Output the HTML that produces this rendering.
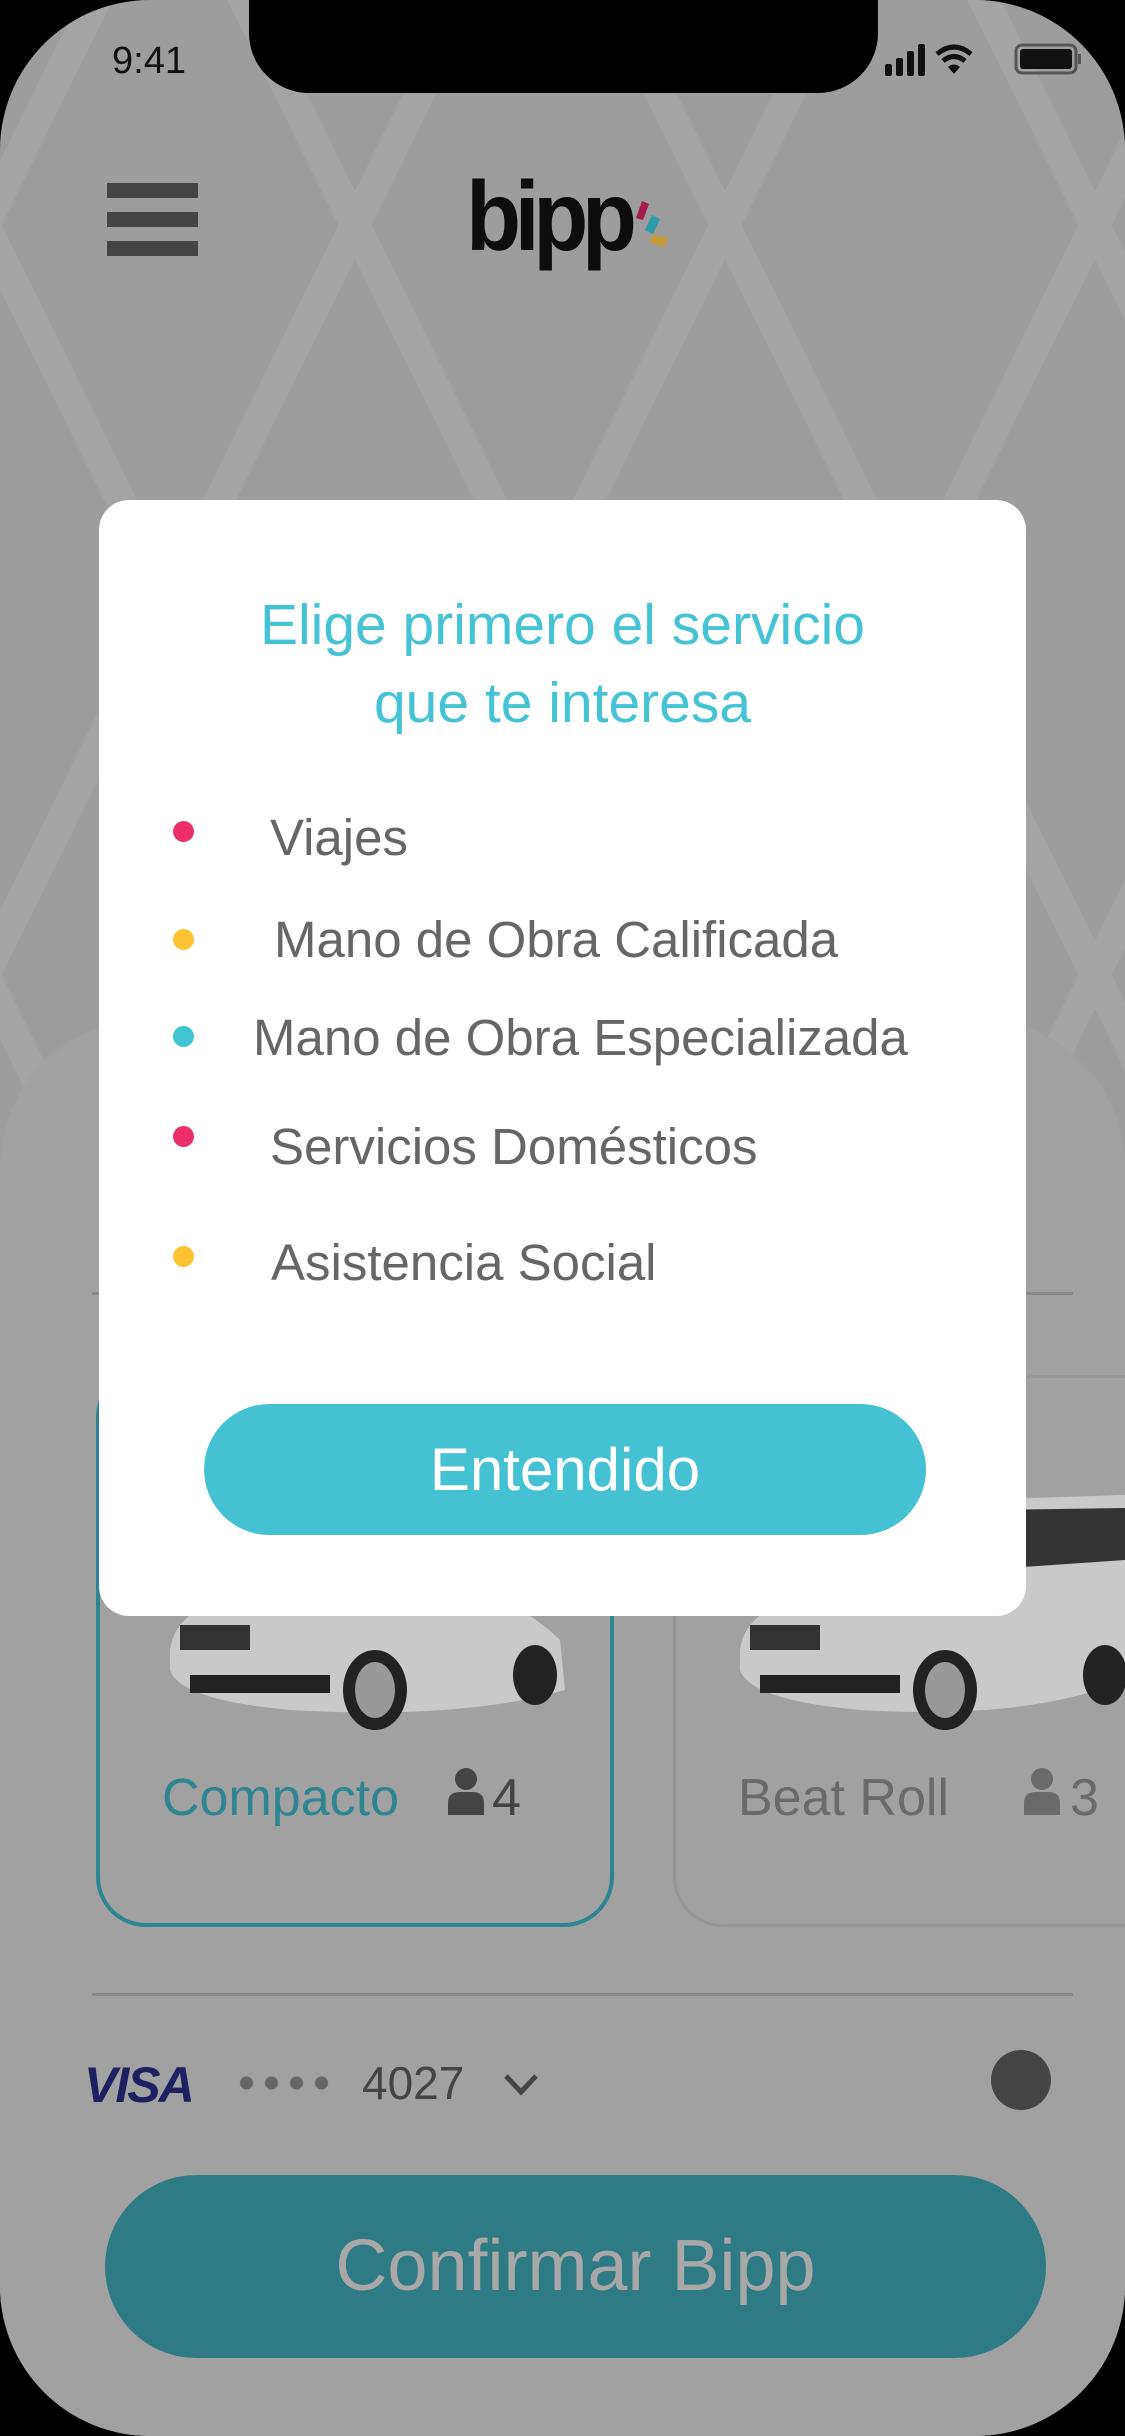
<!DOCTYPE html>
<html><head><meta charset="utf-8"><style>
*{margin:0;padding:0;box-sizing:border-box}
html,body{width:1125px;height:2436px;background:#000;overflow:hidden;font-family:"Liberation Sans",sans-serif}
.screen{position:absolute;left:0;top:0;width:1125px;height:2436px;background:#9d9d9d;border-radius:150px;overflow:hidden}
.pat{position:absolute;left:0;top:0}
.notch{position:absolute;left:249px;top:-10px;width:629px;height:103px;background:#000;border-radius:0 0 60px 60px}
.abs{position:absolute}
.sheet{position:absolute;left:0;top:1018px;width:1125px;height:1500px;background:#a1a1a1;border-radius:150px 150px 0 0}
.bar{position:absolute;left:107px;width:91px;height:15px;background:#444}
.modal{position:absolute;left:99px;top:500px;width:927px;height:1116px;background:#fff;border-radius:30px}
.t{position:absolute;left:0;width:100%;text-align:center;color:#45c3d5;font-size:57px}
.li{position:absolute;color:#666;font-size:51px;white-space:nowrap}
.dot{position:absolute;width:21px;height:21px;border-radius:50%}
</style></head><body>
<div class="screen">
<svg class="pat" width="1125" height="2436" viewBox="0 0 1125 2436">
<g stroke="#a4a4a4" stroke-width="30" fill="none">
<path d="M-200 -150 L170 600 L-200 1350"/>
<path d="M170 -150 L-200 600"/>
<path d="M170 -150 L540 600 L170 1350 L540 2100"/>
<path d="M540 -150 L170 600"/>
<path d="M540 -150 L910 600 L540 1350"/>
<path d="M910 -150 L540 600"/>
<path d="M910 -150 L1280 600 L910 1350"/>
<path d="M1280 -150 L910 600"/>
<path d="M-200 1350 L170 2100"/>
<path d="M910 1350 L540 600"/>
<path d="M170 1350 L-200 600"/>
<path d="M1280 1350 L910 600"/>
</g></svg>
<div class="notch"></div>
<div class="abs" style="left:112px;top:40px;font-size:38px;color:#111">9:41</div>
<svg class="abs" style="left:885px;top:42px" width="200" height="36" viewBox="0 0 200 36">
<rect x="0" y="22" width="7" height="12" rx="2" fill="#111"/><rect x="11" y="16" width="7" height="18" rx="2" fill="#111"/><rect x="22" y="9" width="7" height="25" rx="2" fill="#111"/><rect x="33" y="2" width="7" height="32" rx="2" fill="#111"/>
<path d="M52 12 Q69 -2 86 12" stroke="#111" stroke-width="5" fill="none"/><path d="M58 19 Q69 10 80 19" stroke="#111" stroke-width="5" fill="none"/><path d="M63 25 L69 32 L75 25 Q69 20 63 25Z" fill="#111"/>
<rect x="131" y="3" width="60" height="28" rx="6" stroke="#555" stroke-width="3" fill="none"/><rect x="135" y="7" width="52" height="20" rx="3" fill="#111"/><rect x="193" y="12" width="3" height="10" fill="#555"/>
</svg>
<div class="bar" style="top:183px"></div><div class="bar" style="top:212px"></div><div class="bar" style="top:241px"></div>
<div class="abs" style="left:466px;top:160px;font-size:98px;font-weight:bold;color:#0d0d0d;letter-spacing:-7px;transform:scaleX(0.92);transform-origin:left">bipp</div>
<svg class="abs" style="left:632px;top:198px" width="40" height="56" viewBox="0 0 36 56"><path d="M2 20 L8 3 L15 6 L9 22Z" fill="#a51d4c"/><path d="M11 32 L18 17 L26 21 L19 36Z" fill="#2c9ba8"/><path d="M16 45 L18 37 L34 40 L31 49Z" fill="#c79a3a"/></svg>
<div class="sheet"></div>
<div class="abs" style="left:92px;top:1292px;width:981px;height:3px;background:#8a8a8a"></div>
<div class="abs" style="left:96px;top:1367px;width:518px;height:560px;border:4px solid #2e8490;border-radius:50px"></div>
<div class="abs" style="left:673px;top:1375px;width:520px;height:552px;border:3px solid #979797;border-radius:50px"></div>
<svg class="abs" style="left:160px;top:1560px" width="420" height="180" viewBox="0 0 420 180"><path d="M10 90 Q15 50 70 40 L300 30 Q360 40 400 80 L405 130 Q300 160 130 150 Q20 140 10 110Z" fill="#c9c9c9"/><ellipse cx="215" cy="130" rx="32" ry="40" fill="#222"/><ellipse cx="215" cy="130" rx="20" ry="28" fill="#999"/><ellipse cx="375" cy="115" rx="22" ry="30" fill="#222"/><rect x="20" y="65" width="70" height="25" fill="#333"/><rect x="30" y="115" width="140" height="18" fill="#222"/></svg>
<svg class="abs" style="left:730px;top:1480px" width="395" height="260" viewBox="0 0 395 260"><path d="M10 170 Q15 130 70 120 L240 20 L395 15 L395 200 Q300 240 130 230 Q20 220 10 190Z" fill="#c9c9c9"/><path d="M260 30 L395 28 L395 80 L250 90Z" fill="#333"/><ellipse cx="215" cy="210" rx="32" ry="40" fill="#222"/><ellipse cx="215" cy="210" rx="20" ry="28" fill="#999"/><ellipse cx="375" cy="195" rx="22" ry="30" fill="#222"/><rect x="20" y="145" width="70" height="25" fill="#333"/><rect x="30" y="195" width="140" height="18" fill="#222"/></svg>
<div class="abs" style="left:162px;top:1768px;font-size:52px;color:#2e8490">Compacto</div>
<svg class="abs" style="left:446px;top:1767px" width="40" height="48" viewBox="0 0 40 48"><circle cx="20" cy="12" r="11" fill="#444"/><path d="M2 48 L2 36 Q2 25 14 25 L26 25 Q38 25 38 36 L38 48Z" fill="#444"/></svg>
<div class="abs" style="left:492px;top:1768px;font-size:52px;color:#444">4</div>
<div class="abs" style="left:738px;top:1768px;font-size:52px;color:#6a6a6a">Beat Roll</div>
<svg class="abs" style="left:1022px;top:1767px" width="40" height="48" viewBox="0 0 40 48"><circle cx="20" cy="12" r="11" fill="#6a6a6a"/><path d="M2 48 L2 36 Q2 25 14 25 L26 25 Q38 25 38 36 L38 48Z" fill="#6a6a6a"/></svg>
<div class="abs" style="left:1070px;top:1768px;font-size:52px;color:#6a6a6a">3</div>
<div class="abs" style="left:92px;top:1993px;width:981px;height:3px;background:#8a8a8a"></div>
<div class="abs" style="left:84px;top:2056px;font-size:50px;font-weight:bold;font-style:italic;color:#1f2060;letter-spacing:-2px">VISA</div>
<div class="abs" style="left:234px;top:2076px;width:96px;height:14px;background:radial-gradient(circle,#666 6px,transparent 7px) 0 0/25px 14px repeat-x"></div>
<div class="abs" style="left:362px;top:2056px;font-size:46px;color:#444">4027</div>
<svg class="abs" style="left:503px;top:2072px" width="36" height="24" viewBox="0 0 36 24"><path d="M3 4 L18 20 L33 4" stroke="#444" stroke-width="5" fill="none"/></svg>
<div class="abs" style="left:991px;top:2050px;width:60px;height:60px;border-radius:50%;background:#444"></div>
<div class="abs" style="left:105px;top:2175px;width:941px;height:183px;border-radius:92px;background:#2e7b85;color:#a8a8a8;font-size:72px;text-align:center;line-height:183px">Confirmar Bipp</div>
<div class="modal">
<div class="t" style="top:92px">Elige primero el servicio</div>
<div class="t" style="top:170px">que te interesa</div>
<div class="dot" style="left:74px;top:321px;background:#ec2f6b"></div>
<div class="li" style="left:171px;top:308px">Viajes</div>
<div class="dot" style="left:74px;top:429px;background:#fec232"></div>
<div class="li" style="left:175px;top:410px">Mano de Obra Calificada</div>
<div class="dot" style="left:74px;top:526px;background:#40c5d3"></div>
<div class="li" style="left:154px;top:508px">Mano de Obra Especializada</div>
<div class="dot" style="left:74px;top:626px;background:#ec2f6b"></div>
<div class="li" style="left:171px;top:617px">Servicios Domésticos</div>
<div class="dot" style="left:74px;top:746px;background:#fec232"></div>
<div class="li" style="left:172px;top:733px">Asistencia Social</div>
<div class="abs" style="left:105px;top:904px;width:722px;height:131px;border-radius:66px;background:#44c2d4;color:#fff;font-size:60px;text-align:center;line-height:131px">Entendido</div>
</div>
</div>
</body></html>
